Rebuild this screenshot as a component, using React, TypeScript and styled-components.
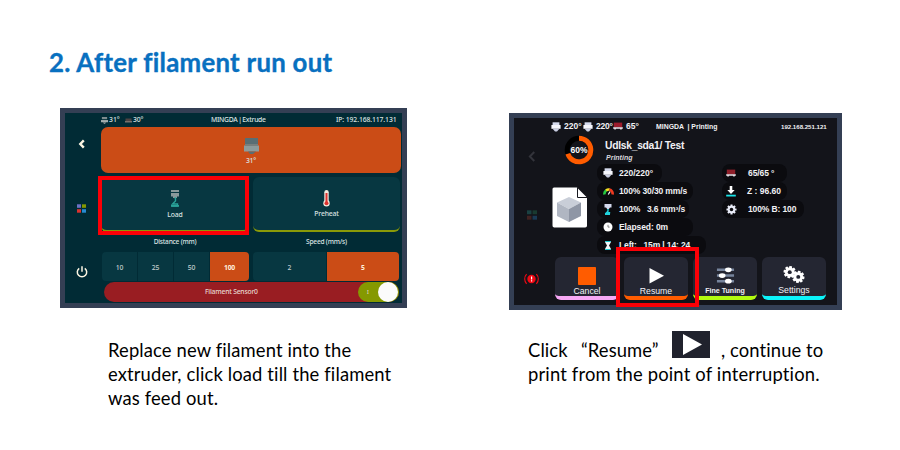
import React from "react";
import styled, { createGlobalStyle } from "styled-components";

const GlobalStyle = createGlobalStyle`
  *, *::before, *::after { box-sizing: border-box; }
  body { margin: 0; background: #fff; }
`;

const Page = styled.main`
  width: 900px;
  height: 450px;
  padding: 45px 0 0;
  overflow: hidden;
  background: #fff;
  font-family: Lato, "Liberation Sans", sans-serif;
  font-variant-ligatures: none;
`;
const Heading = styled.h1`
  margin: 0 0 28px 49px;
  height: 35px;
  font-size: 25.8px;
  line-height: 35px;
  letter-spacing: 0.27px;
  font-weight: 700;
  -webkit-text-stroke: 0.35px #0870c0;
  color: #0870c0;
  white-space: nowrap;
`;
const Columns = styled.div`
  display: grid;
  grid-template-columns: 347px 333px;
  column-gap: 102px;
  margin-left: 60px;
`;
const Step = styled.section<{ $top?: number }>`
  padding-top: ${(p) => p.$top ?? 0}px;
`;
const Caption = styled.p<{ $left: number; $top: number }>`
  margin: ${(p) => p.$top}px 0 0 ${(p) => p.$left}px;
  font-size: 18.4px;
  line-height: 24px;
  color: #000;
  white-space: nowrap;
`;
const Line = styled.span<{ $ls?: number }>`
  display: flex;
  height: 24px;
  white-space: pre;
  letter-spacing: ${(p) => p.$ls ?? 0}px;
`;
const Word = styled.span<{ $w: number }>`
  width: ${(p) => p.$w}px;
`;
const PlayChip = styled.span`
  display: block;
  width: 38px;
  height: 27px;
  margin: -7px 11px 0 0;
  background: #20222d;
  svg { display: block; }
`;

/* Extrude screen */
const ExtrudeScreen = styled.div`
  width: 347px;
  height: 200px;
  border: 5px solid #343f54;
  background: #012b35;
  color: #dbe3e2;
  font-family: "Noto Sans", "Open Sans", sans-serif;
  font-size: 6.8px;
  font-weight: 500;
  letter-spacing: -0.15px;
  display: grid;
  grid-template-columns: 36px 300px;
  grid-template-rows: 14px 176px;
`;
const ExtrudeHeader = styled.header`
  grid-column: 1 / -1;
  display: flex;
  align-items: center;
  padding-left: 36px;
  white-space: pre;
  line-height: 14px;
  svg { flex: none; }
`;
const Cell = styled.span<{ $w?: number; $ls?: number; $pad?: number; $ws?: number }>`
  flex: none;
  width: ${(p) => (p.$w ? `${p.$w}px` : "auto")};
  padding-left: ${(p) => p.$pad ?? 0}px;
  letter-spacing: ${(p) => p.$ls ?? 0}px;
  word-spacing: ${(p) => p.$ws ?? 0}px;
  white-space: pre;
`;
const Rail = styled.nav<{ $pt: number; $gapA: number; $gapB: number }>`
  display: flex;
  flex-direction: column;
  align-items: center;
  padding-top: ${(p) => p.$pt}px;
  padding-right: 3px;
  svg { flex: none; }
  svg:nth-child(2) { margin-top: ${(p) => p.$gapA}px; }
  svg:nth-child(3) { margin-top: ${(p) => p.$gapB}px; }
`;
const ExtrudeBody = styled.div`
  display: flex;
  flex-direction: column;
`;
const HeaterCard = styled.div`
  height: 46px;
  border-radius: 7px;
  background: #cb4c16;
  display: flex;
  flex-direction: column;
  align-items: center;
  padding-top: 11px;
  line-height: 14px;
  svg { display: block; flex: none; }
`;
const ActionRow = styled.div`
  display: grid;
  grid-template-columns: 148px 147px;
  column-gap: 4px;
  margin-top: 4px;
  height: 55px;
`;
const ActionCard = styled.div`
  position: relative;
  border-radius: 6px;
  border-bottom: 2px solid #8a9a08;
  background: #073741;
  display: flex;
  flex-direction: column;
  align-items: center;
  padding-top: 13px;
  line-height: 10px;
  svg { display: block; margin-bottom: 2px; }
`;
const Highlight = styled.div<{ $x: number; $y: number; $w: number; $h: number }>`
  position: absolute;
  left: ${(p) => p.$x}px;
  top: ${(p) => p.$y}px;
  width: ${(p) => p.$w}px;
  height: ${(p) => p.$h}px;
  border: 4px solid #fb0007;
  z-index: 2;
`;
const Labels = styled.div`
  display: grid;
  grid-template-columns: 148px 147px;
  column-gap: 4px;
  height: 20px;
  line-height: 20px;
  font-size: 6.6px;
  letter-spacing: -0.22px;
  text-align: center;
`;
const Segments = styled.div`
  display: grid;
  grid-template-columns: 147px 146px;
  column-gap: 4px;
  height: 29px;
  padding-left: 1px;
`;
const Group = styled.div`
  display: flex;
  gap: 1px;
  border-radius: 4px;
  overflow: hidden;
`;
const Segment = styled.div<{ $on?: boolean; $w?: number }>`
  flex: ${(p) => (p.$w ? `0 0 ${p.$w}px` : "1")};
  display: flex;
  align-items: center;
  justify-content: center;
  padding-top: 2px;
  background: ${(p) => (p.$on ? "#cb4c16" : "#073741")};
  color: ${(p) => (p.$on ? "#fff0dc" : "#c3ced0")};
  font-weight: ${(p) => (p.$on ? 700 : 500)};
`;
const SensorBar = styled.div`
  display: flex;
  align-items: center;
  margin: 1px 0 0 3px;
  width: 295px;
  height: 20px;
  border-radius: 10px;
  background: #991d22;
  color: #e7d6cf;
  line-height: 20px;
`;
const Toggle = styled.div`
  margin-left: auto;
  width: 41px;
  height: 20px;
  border-radius: 10px;
  background: #859900;
  display: flex;
  align-items: center;
  justify-content: space-between;
  padding: 0 1px 0 9px;
  font-size: 5px;
`;
const Knob = styled.span`
  width: 20px;
  height: 20px;
  border-radius: 50%;
  background: #fbfbfb;
`;

/* Printing screen */
const PrintScreen = styled.div`
  width: 333px;
  height: 197px;
  border: 5px solid #343f54;
  background: #13141a;
  color: #f1f1f4;
  font-family: "Liberation Sans", Arial, sans-serif;
  font-size: 8.5px;
  font-weight: 700;
  display: grid;
  grid-template-columns: 38px 285px;
  grid-template-rows: 17px 170px;
`;
const PrintHeader = styled.header`
  grid-column: 1 / -1;
  display: flex;
  align-items: center;
  padding-left: 37px;
  line-height: 17px;
  svg { flex: none; }
`;
const Small = styled(Cell)<{ $size: number }>`
  font-size: ${(p) => p.$size}px;
`;
const PrintBody = styled.div`
  display: flex;
  flex-direction: column;
`;
const JobRow = styled.div`
  display: flex;
  height: 29px;
  padding-left: 12px;
`;
const JobText = styled.div`
  padding: 5px 0 0 11px;
`;
const JobTitle = styled.div`
  font-size: 10.3px;
  line-height: 12px;
  letter-spacing: -0.27px;
  white-space: pre;
`;
const JobState = styled.div`
  font-size: 7px;
  line-height: 11px;
  padding-left: 1px;
  font-style: italic;
  color: #d8d8dc;
`;
const Stats = styled.div`
  display: grid;
  grid-template-columns: 45px 125px 115px;
  height: 90px;
`;
const FileArt = styled.div`
  padding: 23px 0 0 0;
  svg { display: block; }
`;
const PillList = styled.div`
  display: flex;
  flex-direction: column;
  align-items: flex-start;
`;
const Pill = styled.div<{ $w: number; $gap: number; $ls?: number; $pad?: number }>`
  display: flex;
  align-items: center;
  width: ${(p) => p.$w}px;
  height: 18px;
  border-radius: 8px;
  background: #0b0b0f;
  padding-left: ${(p) => p.$pad ?? 6}px;
  letter-spacing: ${(p) => p.$ls ?? 0}px;
  white-space: pre;
  line-height: 18px;
  svg { flex: none; margin-right: ${(p) => p.$gap}px; }
`;
const Buttons = styled.div`
  position: relative;
  display: flex;
  gap: 5px;
  padding: 3px 0 0 3px;
`;
const PrintButton = styled.div<{ $accent: string; $bold?: boolean; $lift?: number }>`
  width: 64px;
  height: 43px;
  border-radius: 6px;
  background: #242632;
  border-bottom: 4px solid ${(p) => p.$accent};
  display: flex;
  flex-direction: column;
  align-items: center;
  justify-content: flex-end;
  padding-bottom: ${(p) => p.$lift ?? 0}px;
  font-size: ${(p) => (p.$bold ? 7.1 : 8.7)}px;
  font-weight: ${(p) => (p.$bold ? 700 : 400)};
  line-height: 10px;
  svg { display: block; margin-bottom: 1px; }
`;

const Nozzle = ({ w = 8, h = 8, top = "#7d8b8e", mid = "#a3aeae" }) => (
  <svg width={w} height={h} viewBox="0 0 16 16" preserveAspectRatio="none">
    <path d="M2 0h12v5H2z" fill={top} />
    <path d="M0 7h16v5H0z" fill={mid} />
    <path d="M4 12h8l-3 4H7z" fill={top} />
  </svg>
);
const BigNozzle = () => (
  <svg width="15" height="16" viewBox="0 0 15 16">
    <path d="M1 0h13v6H1z" fill="#596e74" />
    <path d="M0 7.5h15v6H0z" fill="#8c9b9c" />
    <path d="M4 13.5h8L9 16H6z" fill="#596e74" />
    <path d="M1 6h13v2H1z" fill="#777f7e" />
  </svg>
);
const DimBed = () => (
  <svg width="9" height="8" viewBox="0 0 9 8">
    <path d="M1.5 2.500h6v3h-6z" fill="#4d4242" />
    <path d="M1 5h7v1.500H1z" fill="#77706c" />
  </svg>
);
const HotBed = ({ fill = "#8f1f2a" }) => (
  <svg width="10" height="9" viewBox="0 0 10 9">
    <path d="M.8 .6h8.400v4.600H.8z" fill={fill} />
    <path d="M.2 5.200h9.600v1.600H8.700v.6H7.200v-.6H2.800v.6H1.300v-.6H.2z" fill="#efe6ec" />
  </svg>
);
const LoadIcon = () => (
  <svg width="10" height="18" viewBox="0 0 10 18">
    <path d="M1 0h8v2H1zM1 3h8v3.500H1zM3 6h4v2H3z" fill="#89989a" />
    <path d="M4.5 8h1v3l-3 3h5v2h-6" fill="none" stroke="#2aa198" strokeWidth="1.4" />
    <path d="M1 15h8v1.8H1z" fill="#2aa198" />
  </svg>
);
const Thermometer = () => (
  <svg width="7" height="17" viewBox="0 0 7 17">
    <rect x="1.3" y="0" width="4.4" height="13" rx="2.2" fill="#f3e9de" />
    <circle cx="3.5" cy="13.3" r="3.2" fill="#f3e9de" />
    <rect x="2.5" y="3" width="2" height="9" fill="#dc322f" />
    <circle cx="3.5" cy="13.2" r="2" fill="#dc322f" />
  </svg>
);
const Chevron = ({ color = "#fdf6e3", w = 8, h = 10, sw = 2.4 }) => (
  <svg width={w} height={h} viewBox="0 0 8 10">
    <path d="M5.8 1.4 2.3 5l3.5 3.6" fill="none" stroke={color} strokeWidth={sw} />
  </svg>
);
const Tiles = ({ o = 1, s = 9 }) => (
  <svg width={s} height={s} viewBox="0 0 9 9" opacity={o}>
    <path d="M0 .3h4v3.5H0z" fill={o < 1 ? "#2aa198" : "#6c71c4"} />
    <path d="M5 .3h4v3.5H5z" fill={o < 1 ? "#268b60" : "#859900"} />
    <path d="M0 5.2h4v3.5H0z" fill={o < 1 ? "#a04030" : "#dc322f"} />
    <path d="M5 5.2h4v3.5H5z" fill="#268bd2" />
  </svg>
);
const Power = () => (
  <svg width="12" height="12" viewBox="0 0 12 12" fill="none" stroke="#fdf6e3" strokeWidth="1.5">
    <path d="M3.2 2.3a4.7 4.7 0 1 0 5.6 0M6 .2v5.6" />
  </svg>
);
const Alarm = () => (
  <svg width="15" height="12" viewBox="0 0 15 12">
    <circle cx="7.5" cy="6" r="4.2" fill="#f00a14" />
    <path d="M2.6 1.2a7 7 0 0 0 0 9.6M12.4 1.2a7 7 0 0 1 0 9.6" fill="none" stroke="#f00a14" strokeWidth="1.1" />
    <path d="M7 3.4h1.2v3H7zM7 7.3h1.2v1.2H7z" fill="#fff" />
  </svg>
);
const WhiteNozzle = () => (
  <svg width="10" height="10" viewBox="0 0 10 10">
    <path d="M1.6 .3h6.800v3H1.6z" fill="#d6dbee" />
    <path d="M.4 3h9.2v3.800H.4z" fill="#f5f6fc" />
    <path d="M1.600 6.800h6.800L6 9.500H4z" fill="#c9cee2" />
  </svg>
);
const Gauge = () => (
  <svg width="11" height="9" viewBox="0 0 11 9" fill="none" strokeWidth="2.6">
    <path d="M1.5 7.5a4.2 4.2 0 0 1 1.8-4.2" stroke="#27c840" />
    <path d="M3.1 3.5A4 4 0 0 1 6.6 2.6" stroke="#f4e022" />
    <path d="M6.4 2.6A4 4 0 0 1 9.5 7.5" stroke="#f03a20" />
    <path d="M5.3 7.5 7 4.6" stroke="#fff" strokeWidth="1.2" />
  </svg>
);
const Flow = () => (
  <svg width="10" height="11" viewBox="0 0 10 11">
    <path d="M1.500 0h7v3.5H7L5.8 5H4.2L3 3.5H1.500z" fill="#d5daee" />
    <path d="M5 5v2.2L3.4 8.8h3.8M2 10.2h5" fill="none" stroke="#20d2dc" strokeWidth="1.4" />
  </svg>
);
const Clock = () => (
  <svg width="10" height="10" viewBox="0 0 10 10">
    <circle cx="5" cy="5" r="4.5" fill="#fff" />
    <path d="M5 2.8V5.1h1.600" fill="none" stroke="#666" strokeWidth=".8" />
  </svg>
);
const Hourglass = () => (
  <svg width="10" height="9" viewBox="0 0 10 9">
    <path d="M2.2 0h5.6v1.4L6 4.5l1.8 3V9H2.2V7.5L4 4.5l-1.8-3z" fill="#f1f5f7" />
    <path d="M2.2 0h5.6v1.1H2.2zM2.2 7.9h5.6V9H2.2z" fill="#18c8cf" />
  </svg>
);
const ZArrow = () => (
  <svg width="10" height="11" viewBox="0 0 10 11">
    <path d="M3.700 0h2.600v4h2.4L5 8 1.3 4h2.400z" fill="#fff" />
    <path d="M.2 8.7h9.6v1.8H.2z" fill="#18e4e8" />
  </svg>
);
const Gear = () => (
  <svg width="11" height="11" viewBox="-6 -6 12 12">
    {[0, 45, 90, 135].map((a) => (
      <rect key={a} x="-1.2" y="-5.5" width="2.4" height="11" rx=".4" fill="#e9ecf8" transform={`rotate(${a})`} />
    ))}
    <circle r="4" fill="#e9ecf8" />
    <circle r="1.9" fill="#0b0b0f" />
  </svg>
);
const Ring = () => (
  <svg width="30" height="30" viewBox="0 0 30 30">
    <circle cx="15" cy="15" r="11.8" fill="none" stroke="#000" strokeWidth="5" />
    <path d="M15 3.2A11.8 11.8 0 1 1 3.8 18.7" fill="none" stroke="#ff5c00" strokeWidth="5" />
    <text x="15" y="18.2" fill="#fff" fontSize="8.5" fontWeight="700" textAnchor="middle">60%</text>
  </svg>
);
const CubeFile = () => (
  <svg width="36" height="41" viewBox="0 0 36 41">
    <path d="M2 .5h23l10 10v28.200a1.800 1.800 0 0 1-1.800 1.800H2A1.800 1.800 0 0 1 .5 38.500V2A1.500 1.500 0 0 1 2 .5z" fill="#fff" />
    <path d="M25.500.5v10H35" fill="none" stroke="#17181e" strokeWidth="1" />
    <path d="m17 10 12 5.500-12 6.500-12-6.500z" fill="#c9ced8" />
    <path d="M5 15.500l12 6.500v13L5 29z" fill="#b0b6c2" />
    <path d="M29 15.500l-12 6.500v13l12-6z" fill="#8f96a5" />
  </svg>
);
const Play = () => (
  <svg width="16" height="18" viewBox="0 0 16 18">
    <path d="M1.500 1v15.500L16 8.800z" fill="#fff" />
  </svg>
);
const Stop = () => (
  <svg width="18" height="18" viewBox="0 0 18 18"><rect width="18" height="18" rx=".8" fill="#ff5c00" /></svg>
);
const Sliders = () => (
  <svg width="19" height="19" viewBox="0 0 19 20">
    <path d="M.5 4h18M.5 10h18M.5 16h18" stroke="#76849c" strokeWidth="2.6" />
    <g fill="#fff">
      <ellipse cx="12.500" cy="4" rx="3.500" ry="2.500" />
      <ellipse cx="6" cy="10" rx="3.500" ry="2.500" />
      <ellipse cx="12.500" cy="16" rx="3.500" ry="2.500" />
    </g>
  </svg>
);
const Gears = () => (
  <svg width="22" height="19" viewBox="0 0 23 20">
    {[[7, 7.5], [16, 12.5]].map(([x, y]) => (
      <g key={x} transform={`translate(${x} ${y})`}>
        {[0, 45, 90, 135].map((a) => (
          <rect key={a} x="-1.500" y="-6.500" width="3" height="13" rx=".5" fill="#fff" transform={`rotate(${a + 10})`} />
        ))}
        <circle r="5" fill="#fff" />
        <circle r="2.100" fill="#242632" />
      </g>
    ))}
  </svg>
);

export default function App() {
  return (
    <Page>
      <GlobalStyle />
      <Heading>2. After filament run out</Heading>
      <Columns>
        <Step>
          <ExtrudeScreen>
            <ExtrudeHeader>
              <Nozzle w={7} h={7} />
              <Cell $w={16} $pad={1}>31°</Cell>
              <DimBed />
              <Cell $w={78} $ls={-0.1}>30°</Cell>
              <Cell $w={125} $ls={-0.28} $ws={-0.8}>MINGDA | Extrude</Cell>
              <Cell $ls={-0.1}>IP: 192.168.117.131</Cell>
            </ExtrudeHeader>
            <Rail $pt={12} $gapA={55} $gapB={53}>
              <Chevron />
              <Tiles />
              <Power />
            </Rail>
            <ExtrudeBody>
              <HeaterCard>
                <BigNozzle />
                31°
              </HeaterCard>
              <ActionRow>
                <ActionCard>
                  <LoadIcon />
                  Load
                  <Highlight $x={-3} $y={-1} $w={151} $h={59} />
                </ActionCard>
                <ActionCard>
                  <Thermometer />
                  Preheat
                </ActionCard>
              </ActionRow>
              <Labels>
                <span>Distance (mm)</span>
                <span>Speed (mm/s)</span>
              </Labels>
              <Segments>
                <Group>
                  <Segment $w={35}>10</Segment>
                  <Segment $w={35}>25</Segment>
                  <Segment $w={35}>50</Segment>
                  <Segment $on>100</Segment>
                </Group>
                <Group>
                  <Segment>2</Segment>
                  <Segment $on>5</Segment>
                </Group>
              </Segments>
              <SensorBar>
                <Cell $pad={101} $ls={-0.22}>Filament Sensor0</Cell>
                <Toggle>
                  I
                  <Knob />
                </Toggle>
              </SensorBar>
            </ExtrudeBody>
          </ExtrudeScreen>
          <Caption $left={48} $top={30}>
            <Line $ls={0.13}>Replace new filament into the</Line>
            <Line $ls={0.14}>extruder, click load till the filament</Line>
            <Line $ls={0.14}>was feed out.</Line>
          </Caption>
        </Step>
        <Step $top={5}>
          <PrintScreen>
            <PrintHeader>
              <WhiteNozzle />
              <Cell $w={22} $pad={3}>220°</Cell>
              <WhiteNozzle />
              <Cell $w={20} $pad={3} $ls={-0.2}>220°</Cell>
              <HotBed fill="#9c1c2c" />
              <Cell $w={33} $pad={3}>65°</Cell>
              <Small $size={6.9} $w={125}>MINGDA  | Printing</Small>
              <Small $size={6.1}>192.168.251.121</Small>
            </PrintHeader>
            <Rail $pt={15} $gapA={47} $gapB={53}>
              <Chevron color="#33343b" w={10} h={13} sw={1.6} />
              <Tiles o={0.32} s={10} />
              <Alarm />
            </Rail>
            <PrintBody>
              <JobRow>
                <Ring />
                <JobText>
                  <JobTitle>Udlsk_sda1/ Test</JobTitle>
                  <JobState>Printing</JobState>
                </JobText>
              </JobRow>
              <Stats>
                <FileArt><CubeFile /></FileArt>
                <PillList>
                  <Pill $w={65} $gap={6} $ls={0}><WhiteNozzle />220/220°</Pill>
                  <Pill $w={96} $gap={5} $ls={-0.13}><Gauge />100% 30/30 mm/s</Pill>
                  <Pill $w={92} $gap={6} $ls={-0.12}><Flow />100%   3.6 mm³/s</Pill>
                  <Pill $w={96} $gap={6} $ls={-0.1}><Clock />Elapsed: 0m</Pill>
                  <Pill $w={109} $gap={6} $ls={-0.13}><Hourglass />Left:   15m | 14: 24</Pill>
                </PillList>
                <PillList>
                  <Pill $w={65} $gap={12} $pad={4} $ls={-0.1}><HotBed />65/65 °</Pill>
                  <Pill $w={65} $gap={11} $pad={4}><ZArrow />Z : 96.60</Pill>
                  <Pill $w={82} $gap={11} $pad={4} $ls={-0.12}><Gear />100% B: 100</Pill>
                </PillList>
              </Stats>
              <Buttons>
                <PrintButton $accent="#f7a8f5"><Stop />Cancel</PrintButton>
                <PrintButton $accent="#ff5c00"><Play />Resume</PrintButton>
                <PrintButton $accent="#b2fb10" $bold><Sliders />Fine Tuning</PrintButton>
                <PrintButton $accent="#0cf4fa" $lift={1}><Gears />Settings</PrintButton>
                <Highlight $x={64} $y={-7} $w={83} $h={60} />
              </Buttons>
            </PrintBody>
          </PrintScreen>
          <Caption $left={19} $top={28}>
            <Line $ls={0.1}>
              <Word $w={53}>Click</Word>
              <Word $w={91}>“Resume”</Word>
              <PlayChip>
                <svg width="38" height="27" viewBox="0 0 38 27"><path d="M11 3v21l19-10.500z" fill="#fff" /></svg>
              </PlayChip>
              <Word $w={103}>, continue to</Word>
            </Line>
            <Line $ls={0.17}>print from the point of interruption.</Line>
          </Caption>
        </Step>
      </Columns>
    </Page>
  );
}
